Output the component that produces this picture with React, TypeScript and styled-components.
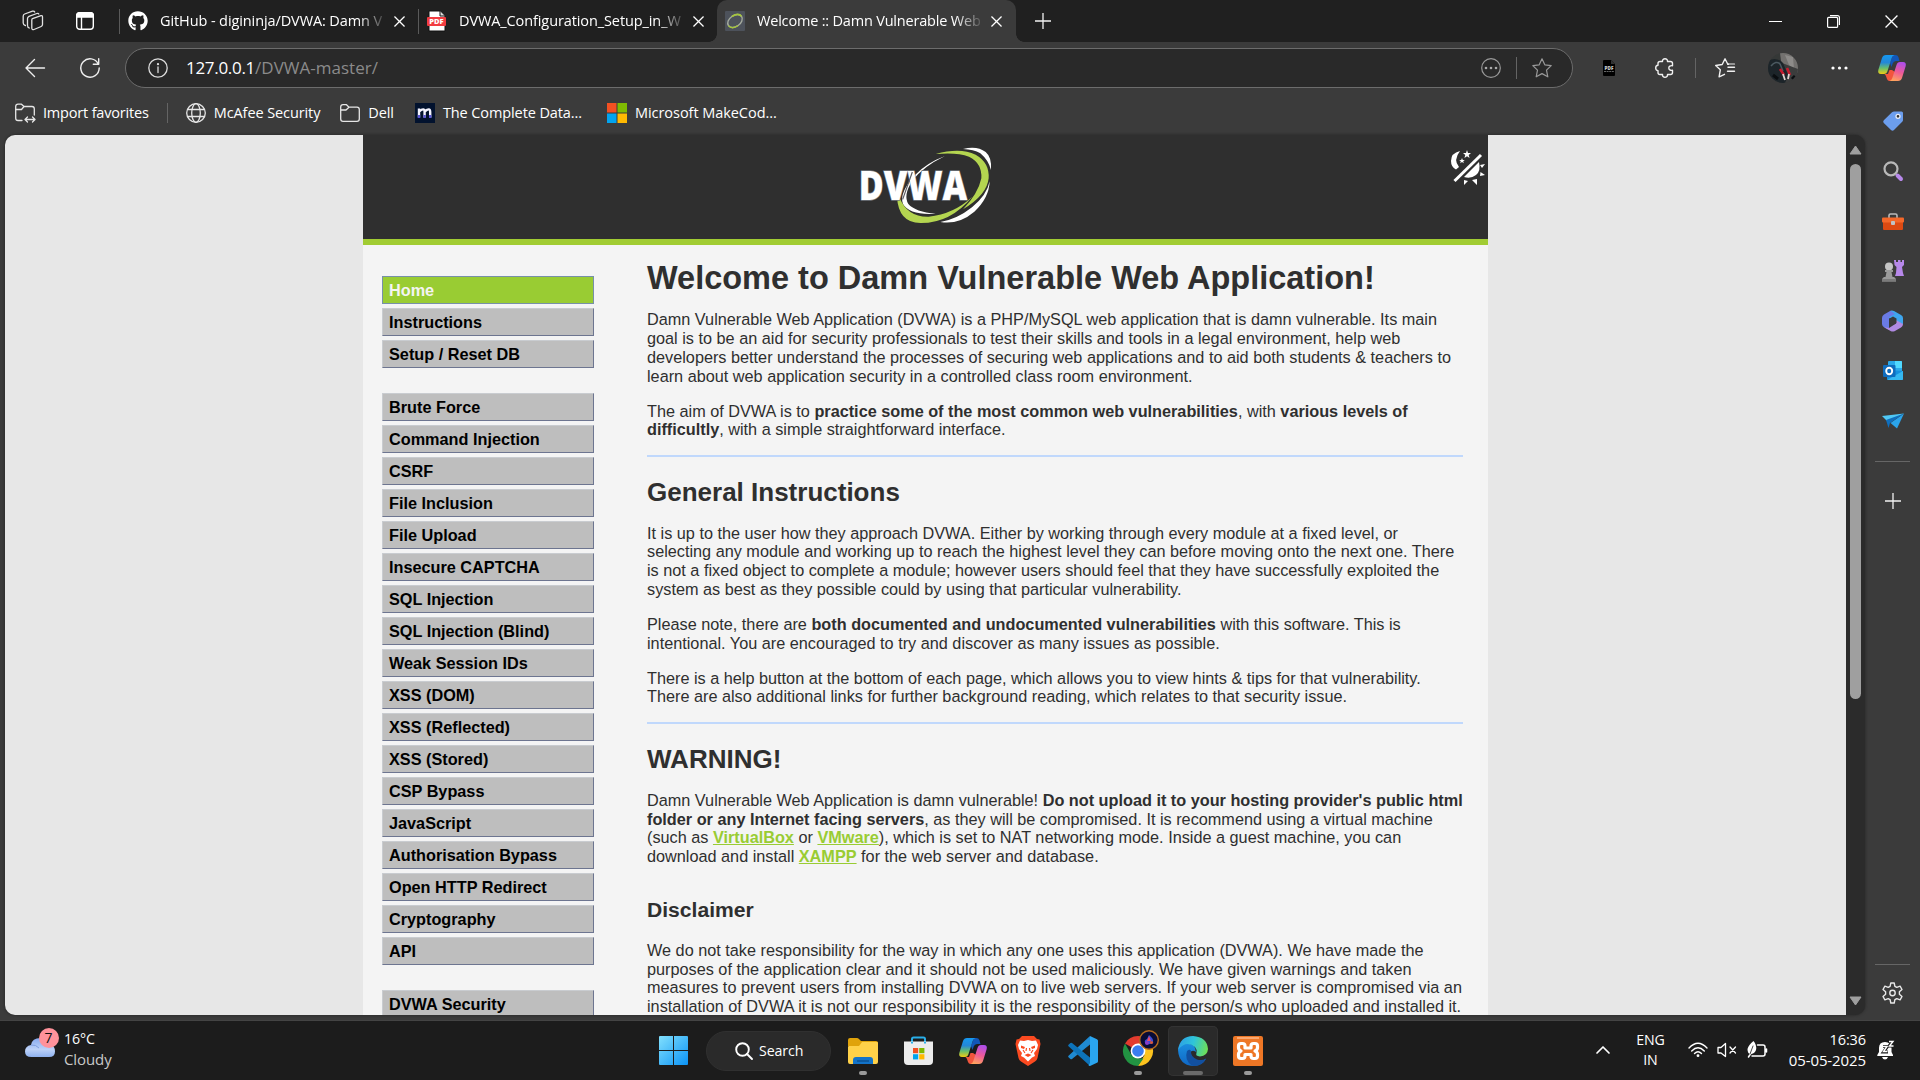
import React from "react";
import styled, { createGlobalStyle } from "styled-components";
import { FaGithub } from "react-icons/fa";

const Global = createGlobalStyle`
  * { box-sizing: border-box; }
  body { margin: 0; background: #3b3b3b; overflow: hidden; }
`;

const ui = `"Open Sans", "Noto Sans", sans-serif`;
const web = `Arial, "Liberation Sans", sans-serif`;

const Screen = styled.div`
  width: 1920px;
  height: 1080px;
  display: flex;
  flex-direction: column;
  background: #3b3b3b;
  color: #fff;
  font-family: ${ui};
  font-size: 14px;
  overflow: hidden;
`;

const Svg = styled.svg<{ $w: number; $h?: number }>`
  width: ${(p) => p.$w}px;
  height: ${(p) => p.$h ?? p.$w}px;
  display: block;
  flex: none;
  overflow: visible;
`;

const Gap = styled.div<{ $w: number }>`
  width: ${(p) => p.$w}px;
  flex: none;
`;

const Spacer = styled.div`
  flex: 1;
`;

const Label = styled.span<{ $ls?: number; $size?: number; $color?: string }>`
  white-space: nowrap;
  letter-spacing: ${(p) => p.$ls ?? -0.1}px;
  font-size: ${(p) => p.$size ?? 14.5}px;
  color: ${(p) => p.$color ?? "#fff"};
  line-height: 20px;
`;

/* ---------- tab strip ---------- */

const TabStrip = styled.div`
  height: 42px;
  flex: none;
  display: flex;
  align-items: center;
  background: #202020;
`;

const TabDivider = styled.div`
  width: 1px;
  height: 25px;
  background: #5a5a5a;
  flex: none;
`;

const Tab = styled.div<{ $w: number; $active?: boolean }>`
  width: ${(p) => p.$w}px;
  height: 42px;
  flex: none;
  display: flex;
  align-items: center;
  padding: 0 10px 0 8px;
  border-radius: 10px 10px 0 0;
  background: ${(p) => (p.$active ? "#3b3b3b" : "transparent")};
`;

const TabTitle = styled(Label)`
  width: 228px;
  margin: -1px 0 0 12px;
  flex: none;
  mask-image: linear-gradient(to right, #000 198px, transparent 228px);
`;

const Flare = styled.div<{ $side: "left" | "right" }>`
  width: 8px;
  height: 8px;
  flex: none;
  align-self: flex-end;
  background: radial-gradient(
    circle at ${(p) => p.$side} top,
    transparent 7.5px,
    #3b3b3b 8px
  );
`;

/* ---------- toolbar ---------- */

const Toolbar = styled.div`
  height: 52px;
  flex: none;
  display: flex;
  align-items: center;
  padding: 0 14px 0 25px;
`;

const AddressBar = styled.div`
  width: 1448px;
  height: 40px;
  flex: none;
  display: flex;
  align-items: center;
  border: 1px solid #6c6c6c;
  border-radius: 20px;
  background: #292929;
  padding: 0 20px 0 22px;
`;

const Url = styled.div`
  font-size: 17px;
  letter-spacing: 0.02px;
  line-height: 24px;
  margin-left: 18px;
  white-space: nowrap;
  color: #8b8b8b;
  b {
    font-weight: 400;
    letter-spacing: -0.3px;
    color: #fff;
  }
`;

const ThinRule = styled.div<{ $h: number }>`
  width: 1px;
  height: ${(p) => p.$h}px;
  background: #646464;
  flex: none;
`;

const Avatar = styled.div`
  width: 30px;
  height: 30px;
  border-radius: 50%;
  overflow: hidden;
  flex: none;
`;

/* ---------- favourites ---------- */

const Favorites = styled.div`
  height: 41px;
  flex: none;
  display: flex;
  align-items: center;
  padding: 0 0 4px 15px;
`;

/* ---------- viewport ---------- */

const Middle = styled.div`
  height: 886px;
  flex: none;
  display: flex;
  padding-left: 5px;
`;

const Viewport = styled.div`
  width: 1860px;
  height: 880px;
  flex: none;
  display: flex;
  border-radius: 10px;
  overflow: hidden;
  background: #2b2b2b;
  box-shadow: 0 0 3px #222;
`;

const Page = styled.div`
  width: 1841px;
  flex: none;
  background: #e7e7e7;
  display: flex;
  justify-content: center;
  overflow: hidden;
`;

const Site = styled.div`
  width: 1125px;
  background: #f4f4f4;
  font-family: ${web};
  color: #2f2f2f;
  flex: none;
`;

const SiteHeader = styled.header`
  height: 110px;
  background: #2f2f2f;
  border-bottom: 6px solid #a1cc33;
  display: grid;
  grid-template-columns: 1fr 137px 1fr;
  align-items: start;
  padding-top: 10px;
`;

const ThemeToggle = styled.div`
  justify-self: end;
  padding: 5px 3px 0 0;
`;

const Columns = styled.div`
  display: flex;
`;

const Menu = styled.nav`
  width: 212px;
  margin: 31px 53px 0 19px;
  flex: none;
`;

const MenuGroup = styled.ul`
  list-style: none;
  margin: 0 0 24.9px;
  padding: 0;
  display: flex;
  flex-direction: column;
  gap: 4.03px;
`;

const MenuItem = styled.li<{ $on?: boolean }>`
  height: 28px;
  padding-left: 6px;
  font-size: 16.25px;
  line-height: 27px;
  font-weight: bold;
  color: ${(p) => (p.$on ? "#f4f4f4" : "#000")};
  background: ${(p) => (p.$on ? "#99cc33" : "#bebebe")};
  border: 1px solid;
  border-color: ${(p) =>
    p.$on ? "#7790a8" : "#c9ccd0 #6d7590 #6d7590 #c9ccd0"};
`;

const Article = styled.main`
  width: 816px;
  padding-top: 15px;
  flex: none;
  white-space: nowrap;
`;

const H1 = styled.h1`
  margin: 0 0 14.4px;
  font-size: 32.5px;
  line-height: 37px;
  height: 36px;
`;

const H2 = styled.h2`
  margin: 21.4px 0 18.95px;
  font-size: 26px;
  line-height: 26px;
`;

const H3 = styled.h3`
  margin: 32.8px 0 20.4px;
  font-size: 21.1px;
  line-height: 22px;
`;

const P = styled.p`
  margin: 0 0 16.25px;
  font-size: 16.25px;
  line-height: 18.75px;
`;

const Rule = styled.div`
  height: 2px;
  background: #c0d8fc;
`;

const Link = styled.a`
  color: #99cc33;
  font-weight: bold;
  text-decoration: underline;
`;

const Scrollbar = styled.div`
  width: 19px;
  display: flex;
  flex-direction: column;
  align-items: center;
  padding: 10px 0 9px;
`;

const Thumb = styled.div`
  width: 11px;
  height: 535px;
  margin-top: 9px;
  border-radius: 6px;
  background: #9f9f9f;
`;

const Sidebar = styled.aside`
  flex: 1;
  display: flex;
  flex-direction: column;
  align-items: center;
  margin-top: -39px;
`;

const SideSlot = styled.div<{ $h?: number }>`
  height: ${(p) => p.$h ?? 50}px;
  width: 40px;
  flex: none;
  display: flex;
  align-items: center;
  justify-content: center;
`;

const SideRule = styled.div<{ $top?: number }>`
  width: 35px;
  height: 1px;
  margin-top: ${(p) => p.$top ?? 0}px;
  background: #666;
  flex: none;
`;

/* ---------- taskbar ---------- */

const Taskbar = styled.footer`
  height: 59px;
  flex: none;
  background: #1c1c1c;
  display: flex;
  align-items: center;
  box-shadow: 0 -1px 0 #444;
`;

const Weather = styled.div`
  width: 635px;
  flex: none;
  display: flex;
  align-items: center;
  padding-left: 24px;
`;

const WeatherArt = styled.div`
  padding-bottom: 16px;
`;

const Tray = styled.div`
  display: flex;
  align-items: center;
  padding-bottom: 2px;
`;

const Stack = styled.div<{ $align?: string; $up?: number }>`
  display: flex;
  flex-direction: column;
  align-items: ${(p) => p.$align ?? "flex-start"};
  padding-bottom: ${(p) => p.$up ?? 0}px;
`;

const SearchPill = styled.div`
  width: 125px;
  height: 40px;
  border-radius: 20px;
  background: #2a2a2a;
  border: 1px solid #303030;
  display: flex;
  align-items: center;
  padding-left: 28px;
  gap: 6px;
  flex: none;
`;

const TaskSlot = styled.div<{ $active?: boolean }>`
  width: 50px;
  height: 50px;
  margin: 0 2.5px;
  border-radius: 5px;
  flex: none;
  display: grid;
  grid-template-rows: 10px 30px 10px;
  justify-items: center;
  background: ${(p) => (p.$active ? "#2a2a2a" : "transparent")};
  box-shadow: ${(p) => (p.$active ? "inset 0 0 0 1px #333" : "none")};
`;

const IconCell = styled.div`
  grid-row: 2;
  height: 30px;
  display: flex;
  align-items: center;
`;

const RunMark = styled.div<{ $w: number; $color: string }>`
  grid-row: 3;
  width: ${(p) => p.$w}px;
  height: 4px;
  margin-top: 5px;
  border-radius: 2px;
  background: ${(p) => p.$color};
`;

/* ---------- icons ---------- */

const Close = ({ s = 11, w = 1.4 }: { s?: number; w?: number }) => (
  <Svg $w={s} viewBox="0 0 12 12" stroke="#fff" strokeWidth={w} fill="none">
    <path d="M.5.5l11 11M11.5.5l-11 11" />
  </Svg>
);

const Plus = () => (
  <Svg $w={16} viewBox="0 0 16 16" stroke="#f2f2f2" strokeWidth="1.3">
    <path d="M8 0v16M0 8h16" />
  </Svg>
);

const WorkspacesIcon = () => (
  <Svg $w={22} viewBox="0 0 22 22" fill="none" stroke="#e2e2e2" strokeWidth="1.3" strokeLinejoin="round" strokeLinecap="round">
    <path d="M10.500 8.700 L19 5.700 Q20.500 5.300 20.500 7 V14.500 Q20.500 16 19.200 16.500 L12 19.500 Q10 20.200 9.800 18.200 V10 Q9.800 9 10.500 8.700z" />
    <path d="M7.300 18Q5.600 17.500 5.500 15.500V8.500Q5.500 7 7 6.300L14.800 3.500Q16.300 3 16.800 4" />
    <path d="M3.400 15.500Q1.300 15 1.200 13V6.200Q1.200 4.600 2.700 4L10.500 1.200Q12.200.700 12.700 2" />
  </Svg>
);

const TabActionsIcon = () => (
  <Svg $w={18} viewBox="0 0 18 18" fill="none" stroke="#fff" strokeWidth="1.4">
    <rect x=".7" y=".7" width="16.600" height="16.600" rx="3" />
    <path d="M.7 5V3.500Q.7.700 3.500.700h11q2.800 0 2.800 2.800V5z" fill="#fff" />
    <path d="M5.500 5v12" />
  </Svg>
);

const PdfFile = () => (
  <Svg $w={20} viewBox="0 0 20 20">
    <path d="M2 0h11l5 5v15H2z" fill="#fff" stroke="#111" strokeWidth="1" />
    <path d="M13 0v5h5" fill="#ddd" stroke="#111" />
    <rect x="0" y="6" width="19" height="9" rx="1" fill="#f23c41" />
    <text x="9.500" y="13.300" fontFamily="Open Sans" fontWeight="800" fontSize="7.500" textAnchor="middle" fill="#fff">PDF</text>
  </Svg>
);

const DvwaFavicon = () => (
  <Svg $w={20} viewBox="0 0 20 20">
    <rect width="20" height="20" rx="1" fill="#4d525b" />
    <g fill="none" transform="rotate(-35 10 10)">
      <ellipse cx="10" cy="10" rx="8" ry="5.500" stroke="#a5ab9f" strokeWidth="1.400" />
      <path d="M10 4.500Q18 5 18 10" stroke="#a6c63c" strokeWidth="1.600" />
      <path d="M2 10Q2.500 15.500 10 15.500" stroke="#a6c63c" strokeWidth="1.400" />
    </g>
  </Svg>
);

const BackIcon = () => (
  <Svg $w={20} viewBox="0 0 20 20" fill="none" stroke="#eee" strokeWidth="1.4" strokeLinecap="round" strokeLinejoin="round">
    <path d="M19.500 10H1M9.500 1.500L1 10l8.500 8.500" />
  </Svg>
);

const ReloadIcon = () => (
  <Svg $w={20} viewBox="0 0 20 20" fill="none" stroke="#eee" strokeWidth="1.4" strokeLinecap="round" strokeLinejoin="round">
    <path d="M18.300 6A9.200 9.200 0 1 0 19.200 10M18.700 .8v5.400h-5.400" />
  </Svg>
);

const InfoIcon = () => (
  <Svg $w={20} viewBox="0 0 20 20" fill="none" stroke="#ddd" strokeWidth="1.3" strokeLinecap="round">
    <circle cx="10" cy="10" r="9.200" />
    <path d="M10 9v5.500" />
    <circle cx="10" cy="6.200" r=".5" fill="#ddd" />
  </Svg>
);

const DotsCircle = () => (
  <Svg $w={20} viewBox="0 0 20 20" fill="none" stroke="#999" strokeWidth="1.200">
    <circle cx="10" cy="10" r="9.300" />
    <g fill="#aaa" stroke="none">
      <circle cx="5" cy="10" r="1.300" />
      <circle cx="10" cy="10" r="1.300" />
      <circle cx="15" cy="10" r="1.300" />
    </g>
  </Svg>
);

const StarIcon = () => (
  <Svg $w={20} viewBox="0 0 20 20" fill="none" stroke="#999" strokeWidth="1.200" strokeLinejoin="round">
    <path d="M10 .8l2.800 6 6.400.8-4.700 4.500 1.300 6.700L10 15.600l-5.800 3.200 1.300-6.700L.8 7.600l6.400-.8z" />
  </Svg>
);

const PdfExtension = () => (
  <Svg $w={12} $h={16} viewBox="0 0 12 16">
    <path d="M1 0h7l4 4v11q0 1-1 1H1q-1 0-1-1V1q0-1 1-1z" fill="#000" />
    <path d="M8 0v4h4" fill="#333" />
    <text x="6" y="9.500" fontFamily="Open Sans" fontWeight="800" fontSize="4.600" textAnchor="middle" fill="#ccc">PDF</text>
    <path d="M1 11.500h10" stroke="#666" strokeDasharray="2 .6" />
  </Svg>
);

const PuzzleIcon = () => (
  <Svg $w={19} $h={20} viewBox="0 0 19 20" fill="none" stroke="#f0f0f0" strokeWidth="1.400" strokeLinejoin="round">
    <path d="M3 5.500Q3 3.500 5 3.500H7.500C7.200 1.800 8.500.7 10 .7S12.800 1.800 12.500 3.500H15.500Q17.500 3.500 17.500 5.500V7.700C15.300 7.300 13.800 8.500 13.800 10S15.300 12.700 17.500 12.300V14.500Q17.500 16.500 15.500 16.500H12.500C12.800 18.200 11.500 19.300 10 19.300S7.200 18.200 7.500 16.500H5Q3 16.500 3 14.500V12.700C1.600 12.500.7 11.400.7 10S1.600 7.500 3 7.300z" />
  </Svg>
);

const FavoritesIcon = () => (
  <Svg $w={20} viewBox="0 0 20 20" fill="none" stroke="#f0f0f0" strokeWidth="1.400" strokeLinejoin="round" strokeLinecap="round">
    <path d="M12.800 6.300L10 .8 7.200 6.500.7 7.500l4.600 4.300-1.200 7L9.500 16.300" />
    <path d="M12.800 6.300h.7M13 9.200h6.500M12.500 13.200h7M12.800 6.300" />
    <path d="M13.500 6h6M12 16.500" strokeWidth="1.200" />
  </Svg>
);

const AvatarArt = () => (
  <Svg $w={30} viewBox="0 0 30 30">
    <rect width="30" height="30" fill="#353837" />
    <path d="M12 0h18v22L18 16 13 8z" fill="#73716f" />
    <path d="M17 2l8 2 1 12-5-4z" fill="#8d8b89" />
    <path d="M14 10l16 6v14H12z" fill="#3b3c3c" />
    <path d="M0 8Q8 3 15 10l5 12-3 8H0z" fill="#1c2429" />
    <path d="M3 13q5-6 9-2l3 7" stroke="#4b5960" strokeWidth="1.500" fill="none" />
    <path d="M12 16l4 6M19 15l3 7" stroke="#c41c2e" strokeWidth="2.600" />
    <path d="M15 21l2 6M21 21l-1 5" stroke="#dfd3cf" strokeWidth="1.800" />
    <path d="M5 22l5 4M24 26l3-3" stroke="#0a0d10" strokeWidth="3" />
  </Svg>
);

const MenuDots = () => (
  <Svg $w={17} $h={4} viewBox="0 0 17 4" fill="#fff">
    <circle cx="2" cy="2" r="1.600" />
    <circle cx="8.500" cy="2" r="1.600" />
    <circle cx="15" cy="2" r="1.600" />
  </Svg>
);

const Copilot = ({ id }: { id: string }) => (
  <Svg $w={28} $h={26} viewBox="0 0 28 26">
    <defs>
      <linearGradient id={id + "a"} x1="0" y1="0" x2="0" y2="1">
        <stop offset="0" stopColor="#1598f0" />
        <stop offset=".4" stopColor="#2487d8" />
        <stop offset=".7" stopColor="#6abf6b" />
        <stop offset="1" stopColor="#f0cc14" />
      </linearGradient>
      <linearGradient id={id + "b"} x1=".6" y1="0" x2=".3" y2="1">
        <stop offset="0" stopColor="#b04ee8" />
        <stop offset=".5" stopColor="#ee5a97" />
        <stop offset="1" stopColor="#ffa45c" />
      </linearGradient>
    </defs>
    <path d="M15 0h2.500q2.200 0 2.900 2.100L21.500 6H18q-2.500 0-3.300 2.500L13.500 12 12 8z" fill="#1156b8" />
    <path d="M6.500 19Q8 20 9 24q.7 2 2.500 2H14l3-9-3-2-2.500 0-1.500 4z" fill="#f2553d" />
    <path d="M8 0h8.500q-2 .3-2.800 3L9.500 16q-.8 3-3.500 3H3Q-.5 19 .3 15L4 3Q5 0 8 0z" fill={`url(#${id}a)`} />
    <path d="M20 26h-8.500q2-.3 2.800-3L18.500 10q.8-3 3.500-3h3q3.500 0 2.700 4L24 23q-1 3-4 3z" fill={`url(#${id}b)`} />
  </Svg>
);

const Folder = ({ arrows }: { arrows?: boolean }) => (
  <Svg $w={20} viewBox="0 0 20 20" fill="none" stroke="#e6e6e6" strokeWidth="1.300" strokeLinejoin="round" strokeLinecap="round">
    {arrows ? (
      <>
        <path d="M7 17.500H3Q.7 17.500.7 15.200V3.500Q.7 1.200 3 1.200H6.500L9 3.500H17Q19.300 3.500 19.300 5.800V12" />
        <path d="M.7 6.500H6.500L9 3.500M10.500 16.500h9M12.500 14l-2.500 2.500 2.500 2.500M17.500 14l2.500 2.500-2.500 2.500" />
      </>
    ) : (
      <path d="M3 18.300Q.7 18.300.7 16V4Q.7 1.700 3 1.700H6.500L9 4.200H17Q19.300 4.200 19.300 6.500V16Q19.300 18.300 17 18.300zM.7 7H6L9 4.200" />
    )}
  </Svg>
);

const Globe = () => (
  <Svg $w={20} viewBox="0 0 20 20" fill="none" stroke="#e6e6e6" strokeWidth="1.300">
    <circle cx="10" cy="10" r="9.300" />
    <ellipse cx="10" cy="10" rx="4.300" ry="9.300" />
    <path d="M1.500 6.500h17M1.500 13.500h17" />
  </Svg>
);

const MFavicon = () => (
  <Svg $w={20} viewBox="0 0 20 20">
    <rect width="20" height="20" fill="#02122e" />
    <g fill="none" strokeWidth="2.400">
      <path d="M4 14.500V5.500M4 8.500Q9.600 4 9.600 9V14.500M9.600 8.500Q15.200 4 15.200 9V14.500" stroke="#f4f4ff" />
      <path d="M4 12v3M9.600 12v3M15.200 12v3" stroke="#5b57d6" />
    </g>
  </Svg>
);

const MsLogo = () => (
  <Svg $w={20} viewBox="0 0 20 20">
    <path d="M0 0h9.500v9.500H0z" fill="#f35022" />
    <path d="M10.500 0H20v9.500h-9.500z" fill="#80bb02" />
    <path d="M0 10.500h9.500V20H0z" fill="#02a4ef" />
    <path d="M10.500 10.500H20V20h-9.500z" fill="#ffb902" />
  </Svg>
);

const DvwaLogo = () => (
  <Svg $w={137} $h={80} viewBox="110 45 411 240">
    <path d="M428 57Q470 46 496 66Q515 82 512 120Q504 90 480 70Q460 58 428 57z" fill="#fff" />
    <path d="M346 72Q420 52 466 74Q508 98 505 145Q500 195 428 238Q474 190 483 145Q486 100 446 80Q410 66 346 72z" fill="#b4d550" />
    <path d="M508 154Q506 205 462 245Q415 285 360 276Q410 268 455 232Q500 195 508 154z" fill="#fff" />
    <path d="M374 78Q320 98 284 135Q235 190 248 222Q268 256 346 251Q285 246 264 222Q248 195 276 152Q308 110 374 78z" fill="#fff" />
    <path d="M230 200Q234 278 300 279Q390 280 456 200Q400 252 325 260Q262 262 238 204z" fill="#b4d550" />
    <text x="115" y="210" fontFamily="Open Sans" fontWeight="800" fontSize="124" textLength="326" lengthAdjust="spacingAndGlyphs" fill="#fff" stroke="#70747c" strokeWidth="4" paintOrder="stroke">DVWA</text>
    <path d="M276 126L247 208" stroke="#5a5a60" strokeWidth="3.500" fill="none" />
  </Svg>
);

const DayNight = () => (
  <Svg $w={35} $h={36} viewBox="0 0 35 36" fill="#fff">
    <path d="M10 1Q1 3 1 11Q1 17 6 19.500L9 17Q3 10 10 1z" />
    <path d="M17 0l1 3h3l-2.300 2 .9 3L17 6.200 14.400 8l.9-3L13 3h3z" />
    <path d="M12 8l.8 2h2l-1.600 1.300.6 2L12 12l-1.800 1.300.6-2L9.200 10h2z" />
    <path d="M31 5L4.500 31" stroke="#fff" strokeWidth="3" />
    <path d="M29 12q2 9-3 13-5 4-12 2z" />
    <path d="M30 15l5-1-3 4zM30.500 22l4.500 3-5 1zM22 30l5-1 0 6zM14 30l4 1-4 4z" />
  </Svg>
);

const Arrow = ({ down }: { down?: boolean }) => (
  <Svg $w={13} $h={10} viewBox="0 0 13 10" fill="#9f9f9f" stroke="#9f9f9f" strokeWidth="1" strokeLinejoin="round">
    <path d={down ? "M1 1h11L6.500 9z" : "M1 9h11L6.500 1z"} />
  </Svg>
);

const TagIcon = () => (
  <Svg $w={20} viewBox="0 0 20 20">
    <path d="M11 .5h7.500Q20 .5 20 2v7q0 1-.8 1.800L11 19q-1.500 1.500-3 0L.8 12q-1.300-1.300 0-2.700L9 1.300Q10 .5 11 .5z" fill="#6c9eee" />
    <circle cx="15" cy="5.300" r="2" fill="#333" stroke="#e8edf7" strokeWidth="1.300" />
  </Svg>
);

const SearchColor = () => (
  <Svg $w={20} viewBox="0 0 20 20" fill="none">
    <path d="M14.500 14.500l3.500 3.500" stroke="#b889ec" strokeWidth="4" strokeLinecap="round" />
    <circle cx="8" cy="7.800" r="6.500" stroke="#b9b9b9" strokeWidth="2.200" />
  </Svg>
);

const Toolbox = () => (
  <Svg $w={22} $h={17} viewBox="0 0 22 17">
    <path d="M7 5V2.500Q7 1 8.500 1h5Q15 1 15 2.500V5" fill="none" stroke="#bbb" strokeWidth="1.600" />
    <rect x="1" y="5" width="20" height="12" rx="1" fill="#dd4a12" />
    <rect x="0" y="4.500" width="22" height="5" rx="1" fill="#f4682a" />
    <rect x="9" y="8" width="4" height="4" rx="1" fill="#bfc3c6" />
  </Svg>
);

const Chess = () => (
  <Svg $w={22} viewBox="0 0 22 22">
    <path d="M12 0h2v2h2V0h2.500v2h1.500V0h2v5l-2 2 1 6 1 3h-9l1-3 .5-6-2-2z" fill="#b788ea" />
    <circle cx="7" cy="6.500" r="4" fill="#c4c4c4" />
    <path d="M3 10h8v2H9.500l1 5H12q2 1 2 3v1.500H0V20q0-2 2-3h1.500l1-5H3z" fill="#9a9a9a" />
    <path d="M0 19h14v2.500H0z" fill="#7b7b7b" />
  </Svg>
);

const M365 = () => (
  <Svg $w={21} $h={22} viewBox="0 0 21 22">
    <path d="M8.500.8Q10 0 12 1l7 4q2 1 2 3v6.500L14 11l-6-3-1.500 1z" fill="#3ea6ee" />
    <path d="M8.500.8L2 4.500Q0 5.600 0 8v6q0 2 2 3.200l5 2.500V8.500Q7 7 8.500 6.300L13 4z" fill="#6a7be6" />
    <path d="M2 17.200l7 4q1.500.8 3.500 0L19 17.500q2-1 2-3.500L14 10v3.500L7 18z" fill="#b08ae2" />
    <path d="M7.500 8.500l3.500-2 3.500 2v4.500L11 15l-3.500-2z" fill="#3b3b3b" />
  </Svg>
);

const Outlook = () => (
  <Svg $w={20} viewBox="0 0 20 20">
    <rect x="5" y="0" width="14" height="14" rx="1" fill="#2aa8ea" />
    <path d="M12 0h6q1 0 1 1v6h-7z" fill="#50d9ff" />
    <path d="M4 9l16 1v8q0 1-1 1H5q-1 0-1-1z" fill="#1490df" />
    <path d="M20 10L4 19h15q1 0 1-1z" fill="#35b8f1" />
    <rect x="0" y="4" width="12.500" height="12" rx="1" fill="#0f6cbd" />
    <ellipse cx="6.200" cy="10" rx="3" ry="3.300" fill="none" stroke="#fff" strokeWidth="1.900" />
  </Svg>
);

const Plane = () => (
  <Svg $w={22} $h={16} viewBox="0 0 22 16">
    <path d="M0 3L22 .5 6 9z" fill="#50c8f5" />
    <path d="M22 .5L15 15.500 8.500 10z" fill="#2ba4ea" />
    <path d="M4 7L22 .5 8 10l-1.500 5z" fill="#0f6fbe" />
  </Svg>
);

const Gear = () => (
  <Svg $w={21} $h={22} viewBox="0 0 21 22" fill="none" stroke="#e8e8e8" strokeWidth="1.400" strokeLinejoin="round">
    <path d="M8.800 1h3.400l.7 3.300 1.900 1.100 3.300-1.200 1.900 3.300-2.600 2.300v2.400l2.600 2.300-1.900 3.300-3.300-1.200-1.900 1.100-.7 3.300H8.800l-.7-3.300-1.900-1.100-3.300 1.200L1 14.500l2.600-2.300V9.800L1 7.500l1.900-3.300 3.300 1.200 1.900-1.100z" />
    <circle cx="10.500" cy="11" r="2.700" />
  </Svg>
);

const CloudIcon = () => (
  <Svg $w={34} $h={29} viewBox="0 0 34 29">
    <defs>
      <linearGradient id="cloud" x1="0" y1="0" x2="0" y2="1">
        <stop offset="0" stopColor="#86a9ee" />
        <stop offset=".6" stopColor="#bdd2f8" />
        <stop offset="1" stopColor="#8fb2f0" />
      </linearGradient>
    </defs>
    <path d="M7.500 29Q1 29 1 23.500T7 17Q8 10 16.500 10T27 17.500Q31 18 31 23.500T25 29z" fill="url(#cloud)" />
    <path d="M7 17q5-.5 8 3" stroke="#7f9fe0" fill="none" />
    <circle cx="25" cy="10" r="10" fill="#ff929b" />
    <text x="24.500" y="15" fontFamily="Open Sans" fontSize="14" textAnchor="middle" fill="#111">7</text>
  </Svg>
);

const Windows = () => (
  <Svg $w={29} viewBox="0 0 29 29">
    <defs>
      <linearGradient id="win" x1="0" y1="0" x2="1" y2="1">
        <stop offset="0" stopColor="#82e0fd" />
        <stop offset="1" stopColor="#0b93f5" />
      </linearGradient>
    </defs>
    <path d="M0 1q0-1 1-1h13v14H0zM15 0h13q1 0 1 1v13H15zM0 15h14v14H1q-1 0-1-1zM15 15h14v13q0 1-1 1H15z" fill="url(#win)" />
  </Svg>
);

const SearchGlyph = () => (
  <Svg $w={18} viewBox="0 0 18 18" fill="none" stroke="#fff" strokeWidth="1.900" strokeLinecap="round">
    <circle cx="7.500" cy="7.500" r="6.300" />
    <path d="M12 12l5 5" />
  </Svg>
);

const Explorer = () => (
  <Svg $w={30} $h={26} viewBox="0 0 30 26">
    <path d="M0 8V2Q0 0 2 0h7q1 0 2 1l2 2h15q2 0 2 2v5z" fill="#e0a30b" />
    <path d="M0 9q0-1 1-1h10l3-4h15q1 0 1 1v19q0 2-2 2H2q-2 0-2-2z" fill="#ffd149" />
    <path d="M5 26v-4q0-3 3-3h14q3 0 3 3v4z" fill="#1373c9" />
    <path d="M9 23h12" stroke="#0b4a86" strokeWidth="1.200" />
  </Svg>
);

const Store = () => (
  <Svg $w={29} $h={30} viewBox="0 0 29 30">
    <path d="M8 7V3q0-1.500 1.500-1.500h10Q21 1.500 21 3v4" fill="none" stroke="#29aee8" strokeWidth="2" />
    <path d="M0 5.500h29V25q0 4-4 4H4q-4 0-4-4z" fill="#ececec" />
    <path d="M8 6v1.500M21 6v1.500" stroke="#29aee8" strokeWidth="2" />
    <path d="M9 12h5.200v5.200H9z" fill="#f25022" />
    <path d="M15.200 12h5.200v5.200h-5.200z" fill="#7fba00" />
    <path d="M9 18.200h5.200v5.200H9z" fill="#00a4ef" />
    <path d="M15.200 18.200h5.200v5.200h-5.200z" fill="#ffb900" />
  </Svg>
);

const Brave = () => (
  <Svg $w={26} $h={30} viewBox="0 0 26 30">
    <path d="M7 0h12l3 3 2.500.5L25.500 8l-3 14q-.5 2-2.500 3.500L13 30l-7-4.500Q4 24 3.500 22L.5 8l1-4.500L4 3z" fill="#fb4a20" />
    <path d="M13 4l4 1 4-.5L23 9l-1 4-3 4 1 3-3 1.500-4 4-4-4L6 20l1-3-3-4-1-4 2-4.500L9 5z" fill="#fff" />
    <path d="M6 9.500l4 1.500-1 2-3-1zM20 9.500L16 11l1 2 3-1zM9.500 19l3.500-1.500 3.500 1.500-3.500 2z" fill="#fb4a20" />
    <path d="M11.500 12l-.5 3M14.500 12l.5 3M8 14l2 3M18 14l-2 3" stroke="#fb4a20" strokeWidth="1.200" />
  </Svg>
);

const VsCode = () => (
  <Svg $w={30} viewBox="0 0 30 30">
    <path d="M22 8.500L4 23q-.8.700-1.600 0L.500 21.300q-.8-.8 0-1.500L22 0z" fill="#1f8ad2" />
    <path d="M22 21.500L4 7q-.8-.7-1.600 0L.500 8.700q-.8.800 0 1.500L22 30z" fill="#0d73ba" />
    <path d="M22 0l7 3.200q1 .5 1 1.600v20.400q0 1.100-1 1.600L22 30q-1 0-1.500-.8L22 27z" fill="#2aa5ef" />
  </Svg>
);

const Chrome = () => (
  <Svg $w={30} viewBox="0 0 30 30">
    <path d="M15 15L2 7.500A15 15 0 0 1 28 7.500z" fill="#e33b2e" />
    <path d="M15 7.500h13A15 15 0 0 1 15 30l6.500-11z" fill="#fcc31e" />
    <path d="M2 7.500L8.500 19 15 22.500h5.500L15 30A15 15 0 0 1 2 7.500z" fill="#229342" />
    <circle cx="15" cy="15" r="7.400" fill="#fff" />
    <circle cx="15" cy="15" r="5.800" fill="#3a7df0" />
    <circle cx="26" cy="4" r="9.300" fill="#0a0c35" stroke="#b56a1e" strokeWidth="1.400" />
    <path d="M26-1q5 4 4 7-3 4-8 1-1-3 2-4z" fill="#3b4ed8" />
    <path d="M26 0l2 5h-4z" fill="#e94c6a" />
    <circle cx="24" cy="7" r="2" fill="#8a3bc8" />
    <circle cx="28.500" cy="6.500" r="1.600" fill="#d4563b" />
  </Svg>
);

const Edge = () => (
  <Svg $w={30} viewBox="0 0 30 30">
    <defs>
      <linearGradient id="edgeTop" x1="0" y1=".3" x2="1" y2=".5">
        <stop offset="0" stopColor="#2d9fe6" />
        <stop offset=".5" stopColor="#2fc5d9" />
        <stop offset="1" stopColor="#6ddf58" />
      </linearGradient>
      <linearGradient id="edgeLow" x1="0" y1="0" x2="0" y2="1">
        <stop offset="0" stopColor="#1b8fe0" />
        <stop offset="1" stopColor="#1067c4" />
      </linearGradient>
    </defs>
    <path d="M0 14Q1 7 9 7.500Q18 8 18 16Q14 13 12 17Q11 25 20 26Q24 26 28 22.500Q24 30 15 30Q1 29 0 14z" fill="url(#edgeLow)" />
    <path d="M9 15Q6 24 14 29.800Q24 31 28.300 22.500Q24 25 19 23.500Q13 21 13 16Q13 12 9 15z" fill="#1250a0" />
    <path d="M0 14Q2 0 15 0Q29 1 30 13Q29.500 20 22 20.500Q17 20 18.500 17Q19.500 14 17 11Q8 4 0 14z" fill="url(#edgeTop)" />
  </Svg>
);

const Xampp = () => (
  <Svg $w={30} viewBox="0 0 30 30">
    <rect width="30" height="30" rx="2" fill="#ee7726" />
    <path d="M4 2h22" stroke="#ffb98a" strokeWidth="1.500" />
    <path d="M9.500 7.500H8Q5.500 7.500 5.500 10V11.500Q5.500 14 8 15Q5.500 16 5.500 18.500V20Q5.500 22.500 8 22.500H9.500Q12 22.500 12 20V18.500H18V20Q18 22.500 20.500 22.500H22Q24.500 22.500 24.500 20V18.500Q24.500 16 22 15Q24.500 14 24.500 11.500V10Q24.500 7.500 22 7.500H20.500Q18 7.500 18 10V12H12V10Q12 7.500 9.500 7.500z" fill="none" stroke="#fff" strokeWidth="3.200" strokeLinejoin="round" />
  </Svg>
);

const Chevron = () => (
  <Svg $w={14} $h={8} viewBox="0 0 14 8" fill="none" stroke="#fff" strokeWidth="1.700" strokeLinecap="round" strokeLinejoin="round">
    <path d="M1 7l6-6 6 6" />
  </Svg>
);

const Wifi = () => (
  <Svg $w={20} $h={16} viewBox="0 0 20 16" fill="none" stroke="#fff" strokeWidth="1.400" strokeLinecap="round">
    <path d="M1 6Q10-3.500 19 6M3.700 9Q10 2.500 16.300 9M6.500 11.500Q10 8 13.500 11.500" />
    <circle cx="10" cy="13.700" r="1.400" fill="#fff" stroke="none" />
  </Svg>
);

const Muted = () => (
  <Svg $w={20} $h={16} viewBox="0 0 20 16" fill="none" stroke="#fff" strokeWidth="1.300" strokeLinecap="round" strokeLinejoin="round">
    <path d="M1 5.500h3L8.500 1.500v13L4 11H1zM13 5l5.500 6M18.500 5L13 11" />
  </Svg>
);

const Battery = () => (
  <Svg $w={21} $h={17} viewBox="0 0 21 17" fill="none" stroke="#fff" strokeWidth="1.500" strokeLinecap="round">
    <path d="M10.500 4H16q2 0 2 2v7q0 2-2 2H5M19.500 8v3" />
    <path d="M1.500 16L6 9" />
    <path d="M6.500 0Q10 4 9 9q-1.500 4-5.500 4Q.5 13 .5 8 1.500 4 6.500 0z" fill="#fff" stroke="none" />
    <path d="M6 5L3 13" stroke="#1c1c1c" strokeWidth=".8" />
  </Svg>
);

const Bell = () => (
  <Svg $w={18} $h={20} viewBox="0 0 18 20" fill="#fff">
    <path d="M8 2Q2 2 2 8v4L.3 15v1H16v-1l-1.500-3V8Q14 2 8 2zM5 17h6q-1 2.500-3 2.500T5 17z" />
    <path d="M6 6.500h4.500L6.500 12H11M11.500 1.500h4L12 6h4" stroke="#1c1c1c" strokeWidth="3" fill="none" />
    <path d="M6 6.500h4L6.500 11.500H10.500M12 1.500h4L12.500 6H16.500" stroke="#fff" strokeWidth="1.400" fill="none" />
  </Svg>
);

/* ---------- content ---------- */

const menu: string[][] = [
  ["Home", "Instructions", "Setup / Reset DB"],
  [
    "Brute Force",
    "Command Injection",
    "CSRF",
    "File Inclusion",
    "File Upload",
    "Insecure CAPTCHA",
    "SQL Injection",
    "SQL Injection (Blind)",
    "Weak Session IDs",
    "XSS (DOM)",
    "XSS (Reflected)",
    "XSS (Stored)",
    "CSP Bypass",
    "JavaScript",
    "Authorisation Bypass",
    "Open HTTP Redirect",
    "Cryptography",
    "API",
  ],
  ["DVWA Security"],
];

const sideIcons = [TagIcon, SearchColor, Toolbox, Chess, M365, Outlook, Plane];

const tasks: { icon: React.ReactNode; run?: boolean; active?: boolean }[] = [
  { icon: <Explorer />, run: true },
  { icon: <Store /> },
  { icon: <Copilot id="task" /> },
  { icon: <Brave /> },
  { icon: <VsCode /> },
  { icon: <Chrome />, run: true },
  { icon: <Edge />, active: true },
  { icon: <Xampp />, run: true },
];

export default function App() {
  return (
    <Screen>
      <Global />
      <TabStrip>
        <Gap $w={22} />
        <WorkspacesIcon />
        <Gap $w={32} />
        <TabActionsIcon />
        <Gap $w={25} />
        <TabDivider />
        <Tab $w={298}>
          <FaGithub size={20} color="#fff" />
          <TabTitle>GitHub - digininja/DVWA: Damn V</TabTitle>
          <Gap $w={6} />
          <Close />
        </Tab>
        <TabDivider />
        <Tab $w={290}>
          <PdfFile />
          <TabTitle>DVWA_Configuration_Setup_in_W</TabTitle>
          <Gap $w={6} />
          <Close />
        </Tab>
        <Flare $side="left" />
        <Tab $w={299} $active>
          <DvwaFavicon />
          <TabTitle $ls={-0.19}>Welcome :: Damn Vulnerable Web</TabTitle>
          <Gap $w={6} />
          <Close />
        </Tab>
        <Flare $side="right" />
        <Gap $w={11} />
        <Plus />
        <Spacer />
        <Svg $w={13} $h={1} viewBox="0 0 13 1">
          <rect width="13" height="1" fill="#fff" />
        </Svg>
        <Gap $w={45} />
        <Svg $w={13} viewBox="0 0 13 13" fill="none" stroke="#fff" strokeWidth="1.200">
          <rect x=".6" y="2.400" width="10" height="10" rx="1" />
          <path d="M3 .6h7.500q1.900 0 1.900 1.900V10" />
        </Svg>
        <Gap $w={45} />
        <Close s={13} w={1.2} />
        <Gap $w={22} />
      </TabStrip>

      <Toolbar>
        <BackIcon />
        <Gap $w={35} />
        <ReloadIcon />
        <Gap $w={25} />
        <AddressBar>
          <InfoIcon />
          <Url>
            <b>127.0.0.1</b>/DVWA-master/
          </Url>
          <Spacer />
          <DotsCircle />
          <Gap $w={15} />
          <ThinRule $h={22} />
          <Gap $w={15} />
          <StarIcon />
        </AddressBar>
        <Gap $w={30} />
        <PdfExtension />
        <Gap $w={40} />
        <PuzzleIcon />
        <Gap $w={21} />
        <ThinRule $h={20} />
        <Gap $w={19} />
        <FavoritesIcon />
        <Gap $w={33} />
        <Avatar>
          <AvatarArt />
        </Avatar>
        <Gap $w={33} />
        <MenuDots />
        <Spacer />
        <Copilot id="bar" />
      </Toolbar>

      <Favorites>
        <Folder arrows />
        <Gap $w={8} />
        <Label $ls={-0.18}>Import favorites</Label>
        <Gap $w={18} />
        <ThinRule $h={20} />
        <Gap $w={18} />
        <Globe />
        <Gap $w={8} />
        <Label>McAfee Security</Label>
        <Gap $w={20} />
        <Folder />
        <Gap $w={8} />
        <Label>Dell</Label>
        <Gap $w={21} />
        <MFavicon />
        <Gap $w={8} />
        <Label>The Complete Data...</Label>
        <Gap $w={25} />
        <MsLogo />
        <Gap $w={8} />
        <Label $ls={-0.05}>Microsoft MakeCod...</Label>
      </Favorites>

      <Middle>
        <Viewport>
          <Page>
            <Site>
              <SiteHeader>
                <span />
                <DvwaLogo />
                <ThemeToggle>
                  <DayNight />
                </ThemeToggle>
              </SiteHeader>
              <Columns>
                <Menu>
                  {menu.map((group) => (
                    <MenuGroup key={group[0]}>
                      {group.map((item) => (
                        <MenuItem key={item} $on={item === "Home"}>
                          {item}
                        </MenuItem>
                      ))}
                    </MenuGroup>
                  ))}
                </Menu>
                <Article>
                  <H1>Welcome to Damn Vulnerable Web Application!</H1>
                  <P>
                    Damn Vulnerable Web Application (DVWA) is a PHP/MySQL web application that is damn vulnerable. Its main
                    <br />
                    goal is to be an aid for security professionals to test their skills and tools in a legal environment, help web
                    <br />
                    developers better understand the processes of securing web applications and to aid both students &amp; teachers to
                    <br />
                    learn about web application security in a controlled class room environment.
                  </P>
                  <P>
                    The aim of DVWA is to <b>practice some of the most common web vulnerabilities</b>, with <b>various levels of</b>
                    <br />
                    <b>difficultly</b>, with a simple straightforward interface.
                  </P>
                  <Rule />
                  <H2>General Instructions</H2>
                  <P>
                    It is up to the user how they approach DVWA. Either by working through every module at a fixed level, or
                    <br />
                    selecting any module and working up to reach the highest level they can before moving onto the next one. There
                    <br />
                    is not a fixed object to complete a module; however users should feel that they have successfully exploited the
                    <br />
                    system as best as they possible could by using that particular vulnerability.
                  </P>
                  <P>
                    Please note, there are <b>both documented and undocumented vulnerabilities</b> with this software. This is
                    <br />
                    intentional. You are encouraged to try and discover as many issues as possible.
                  </P>
                  <P>
                    There is a help button at the bottom of each page, which allows you to view hints &amp; tips for that vulnerability.
                    <br />
                    There are also additional links for further background reading, which relates to that security issue.
                  </P>
                  <Rule />
                  <H2>WARNING!</H2>
                  <P>
                    Damn Vulnerable Web Application is damn vulnerable! <b>Do not upload it to your hosting provider's public html</b>
                    <br />
                    <b>folder or any Internet facing servers</b>, as they will be compromised. It is recommend using a virtual machine
                    <br />
                    (such as <Link>VirtualBox</Link> or <Link>VMware</Link>), which is set to NAT networking mode. Inside a guest machine, you can
                    <br />
                    download and install <Link>XAMPP</Link> for the web server and database.
                  </P>
                  <H3>Disclaimer</H3>
                  <P>
                    We do not take responsibility for the way in which any one uses this application (DVWA). We have made the
                    <br />
                    purposes of the application clear and it should not be used maliciously. We have given warnings and taken
                    <br />
                    measures to prevent users from installing DVWA on to live web servers. If your web server is compromised via an
                    <br />
                    installation of DVWA it is not our responsibility it is the responsibility of the person/s who uploaded and installed it.
                  </P>
                </Article>
              </Columns>
            </Site>
          </Page>
          <Scrollbar>
            <Arrow />
            <Thumb />
            <Spacer />
            <Arrow down />
          </Scrollbar>
        </Viewport>
        <Sidebar>
          {sideIcons.map((Icon, i) => (
            <SideSlot key={i}>
              <Icon />
            </SideSlot>
          ))}
          <SideRule $top={15} />
          <SideSlot $h={78}>
            <Plus />
          </SideSlot>
          <Spacer />
          <SideRule />
          <SideSlot $h={56}>
            <Gear />
          </SideSlot>
        </Sidebar>
      </Middle>

      <Taskbar>
        <Weather>
          <WeatherArt>
            <CloudIcon />
          </WeatherArt>
          <Gap $w={6} />
          <Stack $up={3}>
            <Label $size={14.2}>16°C</Label>
            <Label $size={15} $color="#c8c8c8">Cloudy</Label>
          </Stack>
        </Weather>
        <Gap $w={24} />
        <Windows />
        <Gap $w={18} />
        <SearchPill>
          <SearchGlyph />
          <Label $size={14.2}>Search</Label>
        </SearchPill>
        <Gap $w={4.5} />
        {tasks.map((t, i) => (
          <TaskSlot key={i} $active={t.active}>
            <IconCell>{t.icon}</IconCell>
            {t.run && <RunMark $w={8} $color="#9a9a9a" />}
            {t.active && <RunMark $w={20} $color="#6a6a6a" />}
          </TaskSlot>
        ))}
        <Spacer />
        <Tray>
          <Chevron />
          <Gap $w={26} />
          <Stack $align="center">
            <Label $size={14.2}>ENG</Label>
            <Label $size={14.2}>IN</Label>
          </Stack>
          <Gap $w={23} />
          <Wifi />
          <Gap $w={9} />
          <Muted />
          <Gap $w={10} />
          <Battery />
          <Gap $w={21} />
          <Stack $align="flex-end">
            <Label>16:36</Label>
            <Label $size={15}>05-05-2025</Label>
          </Stack>
          <Gap $w={11} />
          <Bell />
          <Gap $w={25} />
        </Tray>
      </Taskbar>
    </Screen>
  );
}
